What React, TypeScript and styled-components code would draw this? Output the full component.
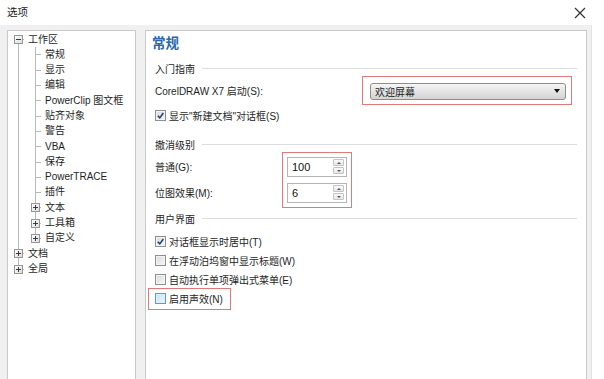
import React from "react";
import styled, { createGlobalStyle } from "styled-components";

const GlobalStyle = createGlobalStyle`
  html, body {
    margin: 0;
    padding: 0;
    background: #ffffff;
  }
  body {
    font-family: "Liberation Sans", "Noto Sans CJK SC", sans-serif;
    font-size: 10px;
    color: #1e1e1e;
  }
`;

const Window = styled.div`
  width: 604px;
  height: 379px;
  overflow: hidden;
  background: #ffffff;
`;

const TitleBar = styled.div`
  height: 25px;
  display: flex;
  align-items: center;
  justify-content: space-between;
  padding: 0 17px 0 7px;
`;

const Caption = styled.span`
  font-size: 10.5px;
  line-height: 25px;
  color: #1a1a1a;
`;

const CloseButton = styled.button`
  width: 14px;
  height: 14px;
  padding: 0;
  border: none;
  background: transparent;
  display: flex;
  align-items: center;
  justify-content: center;
`;

const Body = styled.div`
  width: 592px;
  height: 354px;
  box-sizing: border-box;
  background: #f0f0f0;
  border-right: 1px solid #e2e2e2;
  display: flex;
  gap: 9px;
  padding: 5px 5px 0 7px;
`;

const Panel = styled.div<{ $width: number }>`
  width: ${(p) => p.$width}px;
  height: 370px;
  box-sizing: border-box;
  background: #ffffff;
  border: 1px solid #c9c9c9;
  flex-shrink: 0;
`;

/* ---------- tree ---------- */

const TreeList = styled.div`
  padding-top: 0.5px;
`;

const TreeRow = styled.div`
  height: 15.3px;
  display: flex;
  align-items: stretch;
`;

const Guide = styled.span<{ $line: boolean }>`
  width: 17px;
  flex-shrink: 0;
  position: relative;
  &::before {
    content: "";
    display: ${(p) => (p.$line ? "block" : "none")};
    position: absolute;
    left: 10px;
    top: 0;
    bottom: 0;
    border-left: 1px solid #b8b8b8;
  }
`;

const Connector = styled.span<{ $top: boolean; $bottom: boolean }>`
  width: 20px;
  flex-shrink: 0;
  position: relative;
  &::before {
    content: "";
    position: absolute;
    left: 10px;
    top: ${(p) => (p.$top ? "0" : "50%")};
    bottom: ${(p) => (p.$bottom ? "0" : "50%")};
    border-left: 1px solid #b8b8b8;
  }
  &::after {
    content: "";
    position: absolute;
    left: 10px;
    width: 6px;
    top: 50%;
    border-top: 1px solid #b8b8b8;
  }
`;

const ExpandBox = styled.svg`
  position: absolute;
  left: 6px;
  top: 50%;
  margin-top: -4px;
  z-index: 1;
`;

const TreeLabel = styled.span`
  line-height: 15.3px;
  font-size: 10px;
  color: #1e1e1e;
  white-space: nowrap;
`;

/* ---------- right side ---------- */

const Content = styled.div`
  padding: 0 9px 0 9px;
`;

const PageTitle = styled.div`
  height: 26px;
  line-height: 26px;
  margin: 0 0 0 -3px;
  font-size: 13.5px;
  font-weight: bold;
  color: #2a66b1;
`;

const GroupHead = styled.div<{ $mt?: number }>`
  height: 22px;
  margin-top: ${(p) => p.$mt ?? 0}px;
  display: flex;
  align-items: center;
  gap: 7px;
  color: #1e1e1e;
  &::after {
    content: "";
    flex: 1;
    border-top: 1px solid #dddddd;
  }
`;

const FieldRow = styled.div<{ $mt?: number; $h?: number }>`
  height: ${(p) => p.$h ?? 20}px;
  margin-top: ${(p) => p.$mt ?? 0}px;
  display: flex;
  align-items: center;
`;

const FieldLabel = styled.span<{ $w: number }>`
  width: ${(p) => p.$w}px;
  flex-shrink: 0;
  white-space: nowrap;
`;

const Highlight = styled.div<{ $pad: string; $margin: string }>`
  border: 1px solid #e07a7a;
  padding: ${(p) => p.$pad};
  margin: ${(p) => p.$margin};
  display: flex;
  flex-direction: column;
  gap: 6px;
`;

const Select = styled.div`
  width: 196px;
  height: 17px;
  box-sizing: border-box;
  border: 1px solid #8d8d8d;
  border-radius: 3px;
  background: linear-gradient(#f6f6f6, #e4e4e4 50%, #d4d4d4);
  display: flex;
  align-items: center;
  justify-content: space-between;
  padding: 0 5px 0 4px;
  font-size: 10px;
`;

const Caret = styled.span`
  width: 0;
  height: 0;
  border-left: 3.5px solid transparent;
  border-right: 3.5px solid transparent;
  border-top: 4px solid #111;
`;

const SpinBox = styled.div`
  width: 60px;
  height: 20px;
  box-sizing: border-box;
  border: 1px solid #b3b5b9;
  background: #fff;
  display: flex;
  align-items: center;
  justify-content: space-between;
  padding: 0 2px 0 4px;
`;

const SpinValue = styled.span`
  font-size: 11px;
  color: #111;
`;

const SpinButtons = styled.div`
  display: flex;
  flex-direction: column;
  gap: 1px;
`;

const SpinButton = styled.span<{ $up?: boolean }>`
  width: 11px;
  height: 7px;
  box-sizing: border-box;
  border: 1px solid #c3c3c3;
  border-radius: 1px;
  background: linear-gradient(#fafafa, #e6e6e6);
  display: flex;
  align-items: center;
  justify-content: center;
  &::before {
    content: "";
    width: 0;
    height: 0;
    border-left: 2px solid transparent;
    border-right: 2px solid transparent;
    ${(p) =>
      p.$up ? "border-bottom: 2px solid #555;" : "border-top: 2px solid #555;"}
  }
`;

const CheckRow = styled.div<{ $h?: number; $mt?: number }>`
  height: ${(p) => p.$h ?? 19}px;
  margin-top: ${(p) => p.$mt ?? 0}px;
  display: flex;
  align-items: center;
  gap: 3px;
  white-space: nowrap;
`;

const CheckBox = styled.span<{ $hover?: boolean }>`
  width: 11px;
  height: 11px;
  box-sizing: border-box;
  flex-shrink: 0;
  border: 1px solid ${(p) => (p.$hover ? "#5a9bd0" : "#8e8f8f")};
  background: ${(p) =>
    p.$hover
      ? "linear-gradient(135deg, #c6e2f5, #eaf6fd)"
      : "linear-gradient(135deg, #d9d9d9, #f7f7f7)"};
  box-shadow: inset 0 0 0 1px ${(p) => (p.$hover ? "#dff0fb" : "#f4f4f4")};
  display: flex;
  align-items: center;
  justify-content: center;
`;

const CheckList = styled.div`
  margin-top: 3px;
  display: flex;
  flex-direction: column;
  align-items: flex-start;
`;

const InlineHighlight = styled.div`
  border: 1px solid #e07a7a;
  margin: -1px 0 0 -7px;
  padding: 0 7px 1px 6px;
`;

type TreeItem = {
  label: string;
  level: 0 | 1;
  box?: "plus" | "minus";
  top: boolean;
  bottom: boolean;
};

const tree: TreeItem[] = [
  { label: "工作区", level: 0, box: "minus", top: false, bottom: true },
  { label: "常规", level: 1, top: true, bottom: true },
  { label: "显示", level: 1, top: true, bottom: true },
  { label: "编辑", level: 1, top: true, bottom: true },
  { label: "PowerClip 图文框", level: 1, top: true, bottom: true },
  { label: "贴齐对象", level: 1, top: true, bottom: true },
  { label: "警告", level: 1, top: true, bottom: true },
  { label: "VBA", level: 1, top: true, bottom: true },
  { label: "保存", level: 1, top: true, bottom: true },
  { label: "PowerTRACE", level: 1, top: true, bottom: true },
  { label: "插件", level: 1, top: true, bottom: true },
  { label: "文本", level: 1, box: "plus", top: true, bottom: true },
  { label: "工具箱", level: 1, box: "plus", top: true, bottom: true },
  { label: "自定义", level: 1, box: "plus", top: true, bottom: false },
  { label: "文档", level: 0, box: "plus", top: true, bottom: true },
  { label: "全局", level: 0, box: "plus", top: true, bottom: false },
];

const Box = ({ kind }: { kind: "plus" | "minus" }) => (
  <ExpandBox width="9" height="9" viewBox="0 0 9 9">
    <defs>
      <linearGradient id={`g-${kind}`} x1="0" y1="0" x2="1" y2="1">
        <stop offset="0" stopColor="#ffffff" />
        <stop offset="1" stopColor="#dcdcdc" />
      </linearGradient>
    </defs>
    <rect x="0.5" y="0.5" width="8" height="8" fill={`url(#g-${kind})`} stroke="#969696" />
    <line x1="2" y1="4.5" x2="7" y2="4.5" stroke="#3a3a3a" />
    {kind === "plus" && <line x1="4.5" y1="2" x2="4.5" y2="7" stroke="#3a3a3a" />}
  </ExpandBox>
);

const Tick = () => (
  <svg width="9" height="9" viewBox="0 0 10 10">
    <path d="M2 5.2 L4.2 7.6 L8.2 2.2" fill="none" stroke="#1d3f72" strokeWidth="1.7" />
  </svg>
);

const Check = ({ label, checked, hover }: { label: string; checked?: boolean; hover?: boolean }) => (
  <CheckRow>
    <CheckBox $hover={hover}>{checked && <Tick />}</CheckBox>
    <span>{label}</span>
  </CheckRow>
);

export default function App() {
  return (
    <Window>
      <GlobalStyle />
      <TitleBar>
        <Caption>选项</Caption>
        <CloseButton aria-label="关闭">
          <svg width="12" height="12" viewBox="0 0 12 12">
            <path d="M1 1 L11 11 M11 1 L1 11" stroke="#333" strokeWidth="1.2" />
          </svg>
        </CloseButton>
      </TitleBar>
      <Body>
        <Panel $width={129}>
          <TreeList>
            {tree.map((item) => (
              <TreeRow key={item.label}>
                {item.level === 1 && <Guide $line />}
                <Connector $top={item.top} $bottom={item.bottom}>
                  {item.box && <Box kind={item.box} />}
                </Connector>
                <TreeLabel>{item.label}</TreeLabel>
              </TreeRow>
            ))}
          </TreeList>
        </Panel>
        <Panel $width={442}>
          <Content>
            <PageTitle>常规</PageTitle>
            <GroupHead>入门指南</GroupHead>
            <FieldRow $mt={1}>
              <FieldLabel $w={215}>CorelDRAW X7 启动(S):</FieldLabel>
              <Highlight $pad="6px 5px 4px 7px" $margin="0 0 0 -8px">
                <Select>
                  <span>欢迎屏幕</span>
                  <Caret />
                </Select>
              </Highlight>
            </FieldRow>
            <CheckRow $h={24} $mt={3}>
              <CheckBox>
                <Tick />
              </CheckBox>
              <span>显示"新建文档"对话框(S)</span>
            </CheckRow>
            <GroupHead $mt={6}>撤消级别</GroupHead>
            <FieldRow $h={55} $mt={-3}>
              <FieldLabel $w={127}>
                <FieldRow $h={20}>普通(G):</FieldRow>
                <FieldRow $h={20} $mt={6}>位图效果(M):</FieldRow>
              </FieldLabel>
              <Highlight $pad="4px 4px 4px 4px" $margin="0">
                <SpinBox>
                  <SpinValue>100</SpinValue>
                  <SpinButtons>
                    <SpinButton $up />
                    <SpinButton />
                  </SpinButtons>
                </SpinBox>
                <SpinBox>
                  <SpinValue>6</SpinValue>
                  <SpinButtons>
                    <SpinButton $up />
                    <SpinButton />
                  </SpinButtons>
                </SpinBox>
              </Highlight>
            </FieldRow>
            <GroupHead>用户界面</GroupHead>
            <CheckList>
              <Check label="对话框显示时居中(T)" checked />
              <Check label="在浮动泊坞窗中显示标题(W)" />
              <Check label="自动执行单项弹出式菜单(E)" />
              <InlineHighlight>
                <Check label="启用声效(N)" hover />
              </InlineHighlight>
            </CheckList>
          </Content>
        </Panel>
      </Body>
    </Window>
  );
}
